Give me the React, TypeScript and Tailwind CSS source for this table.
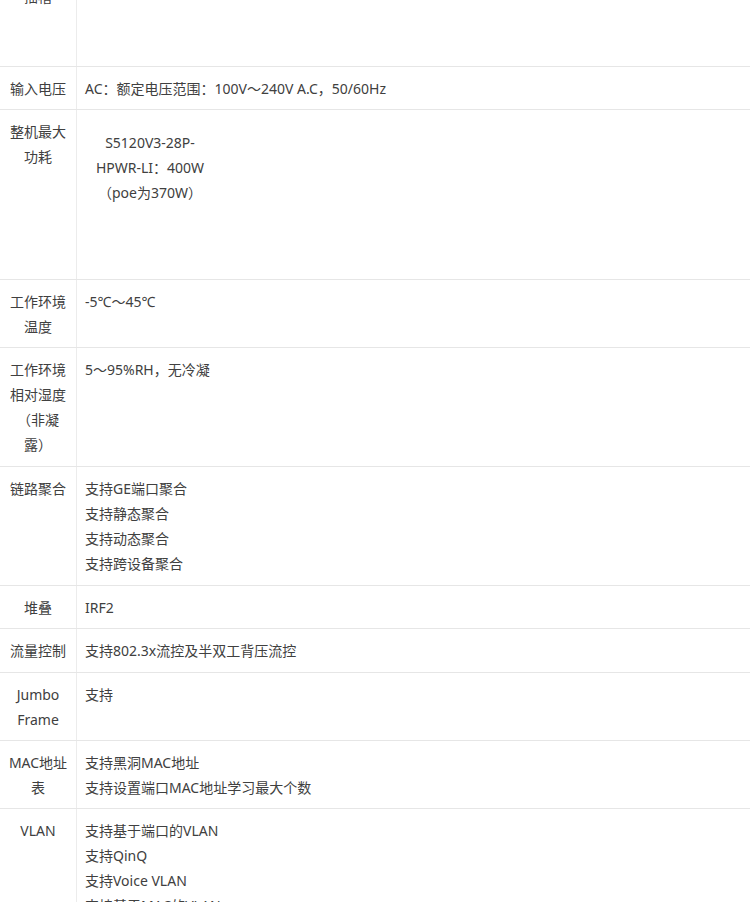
import { ReactNode } from "react";

interface SpecRow {
  label: string;
  value: ReactNode;
  height: string;
}

const rows: SpecRow[] = [
  { label: "电源模块插槽", value: "", height: "h-[117px]" },
  { label: "输入电压", value: "AC：额定电压范围：100V～240V A.C，50/60Hz", height: "h-[43px]" },
  {
    label: "整机最大功耗",
    value: (
      <div className="mt-[11px] w-[130px] text-center">
        S5120V3-28P-
        <br />
        HPWR-LI：400W
        <br />
        （poe为370W）
      </div>
    ),
    height: "h-[170px]",
  },
  { label: "工作环境温度", value: "-5℃～45℃", height: "h-[68px]" },
  { label: "工作环境相对湿度（非凝露）", value: "5～95%RH，无冷凝", height: "h-[119px]" },
  {
    label: "链路聚合",
    value: ["支持GE端口聚合", "支持静态聚合", "支持动态聚合", "支持跨设备聚合"],
    height: "h-[119px]",
  },
  { label: "堆叠", value: "IRF2", height: "h-[43px]" },
  { label: "流量控制", value: "支持802.3x流控及半双工背压流控", height: "h-[44px]" },
  { label: "Jumbo Frame", value: "支持", height: "h-[68px]" },
  { label: "MAC地址表", value: ["支持黑洞MAC地址", "支持设置端口MAC地址学习最大个数"], height: "h-[68px]" },
  {
    label: "VLAN",
    value: ["支持基于端口的VLAN", "支持QinQ", "支持Voice VLAN", "支持基于MAC的VLAN"],
    height: "h-[130px]",
  },
];

export default function App() {
  return (
    <div
      className="w-[750px] h-[902px] overflow-hidden bg-white text-[14px] leading-[25px] text-[#404040]"
      style={{ fontFamily: '"Noto Sans", "Noto Sans CJK SC", sans-serif' }}
    >
      <div className="-mt-[50px]">
        {rows.map((row, i) => (
          <div key={i} className={`grid grid-cols-[77px_1fr] border-b border-[#e6e6e6] ${row.height}`}>
            <div className="border-r border-[#ececec] px-[7px] pt-[9px] text-center break-words">{row.label}</div>
            <div className="pl-[8px] pr-2 pt-[9px]">
              {Array.isArray(row.value) ? row.value.map((v) => <div key={v}>{v}</div>) : row.value}
            </div>
          </div>
        ))}
      </div>
    </div>
  );
}
